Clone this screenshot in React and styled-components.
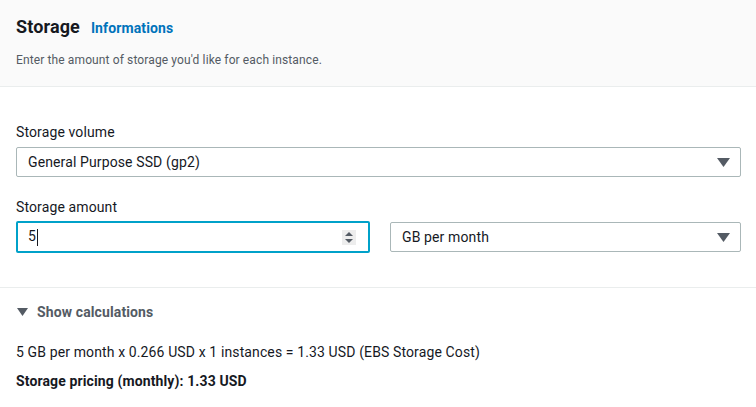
import React from 'react'
import styled, { createGlobalStyle } from 'styled-components'

const Global = createGlobalStyle`
  body {
    margin: 0;
    background: #fff;
    font-family: Roboto, "Liberation Sans", sans-serif;
    color: #16191f;
    letter-spacing: 0.12px;
  }
`

const Panel = styled.div`
  width: 756px;
`

const Header = styled.div`
  background: #fafafa;
  border-bottom: 1px solid #eaeded;
  padding: 15px 16px 18px;
`

const TitleRow = styled.div`
  display: flex;
  align-items: baseline;
  gap: 11px;
`

const Title = styled.h2`
  margin: 0;
  font-size: 18px;
  font-weight: 700;
  line-height: 24px;
  color: #16191f;
`

const InfoLink = styled.a`
  font-size: 14px;
  font-weight: 700;
  color: #0073bb;
  text-decoration: none;
`

const Description = styled.p`
  margin: 13px 0 0;
  font-size: 12px;
  line-height: 16px;
  color: #545b64;
`

const Body = styled.div`
  padding: 36px 15px 34px 16px;
  border-bottom: 1px solid #eaeded;
  display: flex;
  flex-direction: column;
  gap: 21px;
`

const Field = styled.div`
  display: flex;
  flex-direction: column;
  gap: ${p => p.$gap || 6}px;
`

const Label = styled.label`
  font-size: 14px;
  line-height: 18px;
  color: #16191f;
`

const Row = styled.div`
  display: flex;
  align-items: flex-start;
  gap: 20px;
`

const Select = styled.div`
  flex: ${p => (p.$grow ? 1 : 'none')};
  height: 30px;
  box-sizing: border-box;
  border: 1px solid #aab7b8;
  border-radius: 2px;
  display: flex;
  align-items: center;
  justify-content: space-between;
  padding: 0 10px 0 11px;
  font-size: 14px;
  color: #16191f;
  margin-top: ${p => p.$offset || 0}px;
`

const Caret = () => (
  <svg width="13" height="9" viewBox="0 0 13 9">
    <path d="M0 0 H13 L6.5 9 Z" fill="#545b64" />
  </svg>
)

const NumberInput = styled.div`
  flex: 1;
  height: 32px;
  box-sizing: border-box;
  border: 2px solid #00a1c9;
  border-radius: 2px;
  display: flex;
  align-items: center;
  justify-content: space-between;
  padding: 0 12px 0 10px;
  font-size: 14px;
  color: #16191f;
`

const Cursor = styled.span`
  display: inline-block;
  width: 1px;
  height: 17px;
  background: #16191f;
  vertical-align: middle;
  margin-left: 1px;
`

const Spinner = styled.div`
  width: 14px;
  height: 15px;
  background: #ededed;
  display: flex;
  align-items: center;
  justify-content: center;
`

const Footer = styled.div`
  padding: 15px 16px;
`

const Toggle = styled.div`
  display: flex;
  align-items: center;
  gap: 9px;
  font-size: 14px;
  line-height: 18px;
  font-weight: 700;
  color: #545b64;
  padding-left: 1px;
`

const Calc = styled.p`
  margin: 22px 0 0;
  font-size: 14px;
  line-height: 18px;
  color: #16191f;
`

const Total = styled.p`
  margin: 11px 0 0;
  font-size: 14px;
  font-weight: 700;
  line-height: 18px;
  color: #16191f;
`

export default function App() {
  return (
    <Panel>
      <Global />
      <Header>
        <TitleRow>
          <Title>Storage</Title>
          <InfoLink>Informations</InfoLink>
        </TitleRow>
        <Description>Enter the amount of storage you'd like for each instance.</Description>
      </Header>
      <Body>
        <Field>
          <Label>Storage volume</Label>
          <Select>
            <span>General Purpose SSD (gp2)</span>
            <Caret />
          </Select>
        </Field>
        <Field $gap={5}>
          <Label>Storage amount</Label>
          <Row>
            <NumberInput>
              <span>5<Cursor /></span>
              <Spinner>
                <svg width="8" height="11" viewBox="0 0 8 11">
                  <path d="M0 4 L4 0 L8 4 Z M0 7 L4 11 L8 7 Z" fill="#545b64" />
                </svg>
              </Spinner>
            </NumberInput>
            <Select $grow $offset={1}>
              <span>GB per month</span>
              <Caret />
            </Select>
          </Row>
        </Field>
      </Body>
      <Footer>
        <Toggle>
          <svg width="11" height="8" viewBox="0 0 11 8">
            <path d="M0 0 H11 L5.5 8 Z" fill="#545b64" />
          </svg>
          Show calculations
        </Toggle>
        <Calc>5 GB per month x 0.266 USD x 1 instances = 1.33 USD (EBS Storage Cost)</Calc>
        <Total>Storage pricing (monthly): 1.33 USD</Total>
      </Footer>
    </Panel>
  )
}
